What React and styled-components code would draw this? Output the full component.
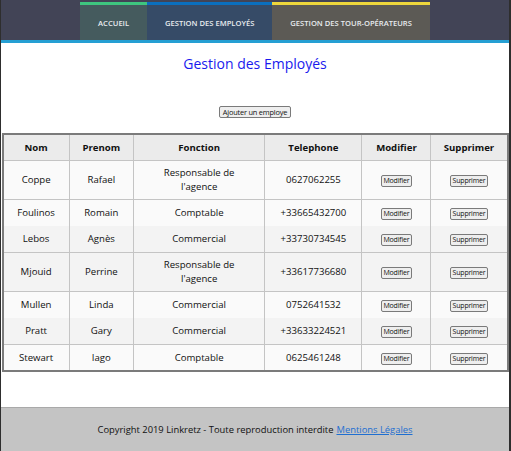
import React from 'react'
import styled, { createGlobalStyle } from 'styled-components'

const Global = createGlobalStyle`
  html, body { margin: 0; padding: 0; background: #fff; }
  body { font-family: "Open Sans", "DejaVu Sans", sans-serif; }
`

const Frame = styled.div`
  width: 511px;
  height: 451px;
  box-sizing: border-box;
  border-left: 1px solid #2e2e2e;
  border-right: 2px solid #2e2e2e;
  display: flex;
  flex-direction: column;
  overflow: hidden;
`

const Header = styled.header`
  background: #424456;
  border-bottom: 3px solid #259fd3;
  padding-top: 2px;
  display: flex;
  justify-content: center;
`

const NavItem = styled.a`
  display: flex;
  align-items: center;
  height: 35px;
  padding: 0 18px;
  border-top: 3px solid ${p => p.accent};
  background: ${p => p.bg};
  color: #e8ecef;
  font-size: 7.6px;
  font-weight: 600;
  text-transform: uppercase;
  text-decoration: none;
  white-space: nowrap;
`

const Main = styled.main`
  flex: 1;
  display: flex;
  flex-direction: column;
  align-items: center;
`

const Title = styled.h1`
  margin: 11px 0 0;
  font-size: 14px;
  font-weight: 400;
  color: #1a1aee;
  line-height: 20px;
`

const SmallButton = styled.button`
  font-family: "Open Sans", sans-serif;
  font-size: 7px;
  letter-spacing: -0.2px;
  line-height: 10px;
  padding: 0 2px;
  color: #111;
  background: #eeeeee;
  border: 1px solid #7a7a7a;
  border-radius: 2px;
`

const AddButton = styled(SmallButton)`
  margin-top: 32px;
  font-size: 7.4px;
  line-height: 10px;
  padding: 0 3px;
`

const Table = styled.table`
  margin-top: 15px;
  width: 507px;
  border: 2px solid #7b7b7b;
  border-collapse: collapse;
  font-size: 9.6px;
  color: #111;
`

const Th = styled.th`
  background: #ebebeb;
  height: 25px;
  padding: 0;
  font-weight: 700;
  border-right: 1px solid #c4c4c4;
  border-bottom: 1px solid #c4c4c4;
  width: ${p => p.w}px;
  &:last-child { border-right: none; }
`

const Row = styled.tr`
  background: ${p => (p.shade ? '#f3f3f3' : '#fafafa')};
  border-bottom: ${p => (p.line ? '1px solid #c4c4c4' : 'none')};
  height: ${p => (p.tall ? 39 : 26.5)}px;
`

const Td = styled.td`
  text-align: center;
  padding: 0 4px;
  line-height: 14px;
  border-right: 1px solid #c4c4c4;
  &:last-child { border-right: none; }
`

const Footer = styled.footer`
  height: 43px;
  background: #c4c4c4;
  border-top: 1px solid #a9a9a9;
  display: flex;
  align-items: center;
  justify-content: center;
  font-size: 9.4px;
  color: #111;
  gap: 3px;
`

const Link = styled.a`
  color: #1f6fd1;
  text-decoration: underline;
`

const employees = [
  ['Coppe', 'Rafael', "Responsable de l'agence", '0627062255', false, true],
  ['Foulinos', 'Romain', 'Comptable', '+33665432700', false, false],
  ['Lebos', 'Agnès', 'Commercial', '+33730734545', true, true],
  ['Mjouid', 'Perrine', "Responsable de l'agence", '+33617736680', true, true],
  ['Mullen', 'Linda', 'Commercial', '0752641532', false, false],
  ['Pratt', 'Gary', 'Commercial', '+33633224521', true, true],
  ['Stewart', 'Iago', 'Comptable', '0625461248', false, false],
]

const cols = [
  ['Nom', 66], ['Prenom', 64], ['Fonction', 133],
  ['Telephone', 97], ['Modifier', 69], ['Supprimer', 76],
]

export default function App() {
  return (
    <Frame>
      <Global />
      <Header>
        <NavItem bg="#455b5e" accent="#3ec67f">Accueil</NavItem>
        <NavItem bg="#364b67" accent="#0b6fbe">Gestion des employés</NavItem>
        <NavItem bg="#5c5a55" accent="#eed73c">Gestion des tour-opérateurs</NavItem>
      </Header>
      <Main>
        <Title>Gestion des Employés</Title>
        <AddButton>Ajouter un employe</AddButton>
        <Table>
          <thead>
            <tr>
              {cols.map(([c, w]) => <Th key={c} w={w}>{c}</Th>)}
            </tr>
          </thead>
          <tbody>
            {employees.map(([nom, prenom, fonction, tel, shade, line]) => (
              <Row key={nom} shade={shade} line={line} tall={fonction.length > 15}>
                <Td>{nom}</Td>
                <Td>{prenom}</Td>
                <Td>{fonction.length > 15 ? <>Responsable de<br />l'agence</> : fonction}</Td>
                <Td>{tel}</Td>
                <Td><SmallButton>Modifier</SmallButton></Td>
                <Td><SmallButton>Supprimer</SmallButton></Td>
              </Row>
            ))}
          </tbody>
        </Table>
      </Main>
      <Footer>
        Copyright 2019 Linkretz - Toute reproduction interdite
        <Link href="#">Mentions Légales</Link>
      </Footer>
    </Frame>
  )
}
